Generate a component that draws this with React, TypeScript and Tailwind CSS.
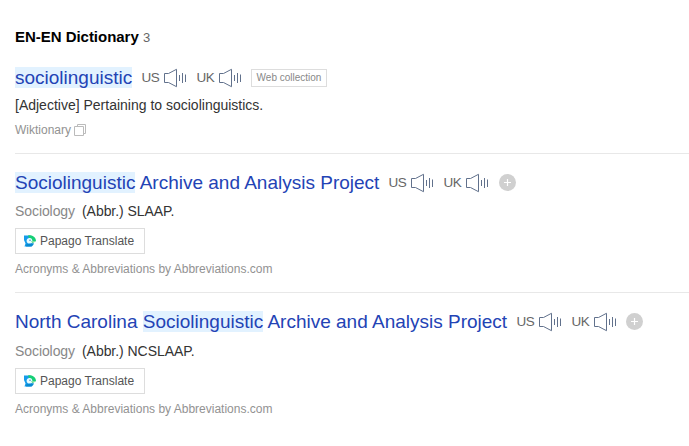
import type { ReactNode } from "react";

function Speaker() {
  return (
    <svg width="24" height="20" viewBox="0 0 24 20" fill="none" stroke="#61718c" strokeWidth="1" className="block shrink-0">
      <path d="M4.5 5.5H0.5V14.5H4.5L12.5 18.7V1.3L4.5 5.5" />
      <path d="M15.5 7V13M18.5 5V15M21.5 6.5V14" />
    </svg>
  );
}

function Pronunciation({ label }: { label: string }) {
  return (
    <span className="flex h-[21px] w-[55px] shrink-0 items-center">
      <span className="w-[23px] pt-[2px] pl-[0.6px] text-[13.5px] tracking-[-0.5px] whitespace-nowrap text-[#666]">{label}</span>
      <Speaker />
    </span>
  );
}

function Mark({ children }: { children: ReactNode }) {
  return <span className="inline-block h-[21px] bg-[#e2f2ff] leading-[21px]">{children}</span>;
}

function Title({ children, width, tail }: { children: ReactNode; width: string; tail: ReactNode }) {
  return (
    <div className="flex h-[21px] items-center">
      <h3 className={`${width} h-[21px] shrink-0 text-[19px] leading-[21px] font-normal whitespace-nowrap text-[#2343b5]`}>{children}</h3>
      <Pronunciation label="US" />
      <Pronunciation label="UK" />
      {tail}
    </div>
  );
}

function AddButton() {
  return (
    <svg width="17" height="17" viewBox="0 0 17 17" className="block">
      <circle cx="8.5" cy="8.5" r="8.5" fill="#d0d0d0" />
      <path d="M8.5 5V12M5 8.5H12" stroke="#fff" strokeWidth="1.2" />
    </svg>
  );
}

function PapagoIcon() {
  return (
    <svg width="12" height="12" viewBox="0 0 12 12" className="block">
      <path d="M0 .5H6L9 5L8 11.5H.5L1.5 8.5L0 5Z" fill="#159bea" />
      <path d="M4 .5C8.5-.3 12 2.5 12 6.3H7.8L5 3Z" fill="#16cf75" />
      <path d="M2.6 6C2.6 4.1 4 3 5.8 3.1C7.4 3.2 8.2 4.2 8.2 5.5L9.5 6.5L8 7.9C6 9.2 2.6 8.6 2.6 6Z" fill="#e8fbff" />
      <circle cx="6" cy="5.3" r=".7" fill="#2878b8" />
      <path d="M7 6.3H12L8.5 8.2Z" fill="#62d98c" />
      <path d="M2.5 9.2L10 8.2C9.3 10.5 8 11.5 6 11.5H2Z" fill="#0788cf" />
    </svg>
  );
}

function ProjectEntry({ title, width, abbr, gap, tail }: { title: ReactNode; width: string; abbr: string; gap: string; tail: ReactNode }) {
  return (
    <article className="h-[140px] border-t border-[#e8e8e8] pt-[18px]">
      <Title width={width} tail={tail}>{title}</Title>
      <p className={`${gap} flex h-[18px] items-center text-[14px] leading-[18px]`}>
        <span className="w-[67px] tracking-[-0.08px] text-[#888]">Sociology</span>
        <span className="tracking-[-0.05px] text-[#333]">(Abbr.) {abbr}</span>
      </p>
      <button className="mt-[8px] flex h-[26px] w-[130px] items-center border border-[#ddd] pl-[8px] text-[12px] text-[#555]">
        <PapagoIcon />
        <span className="ml-[4px] whitespace-nowrap">Papago Translate</span>
      </button>
      <p className="mt-[7px] text-[12px] leading-[16px] text-[#929292]">Acronyms &amp; Abbreviations by Abbreviations.com</p>
    </article>
  );
}

export default function App() {
  return (
    <main className="h-[446px] overflow-hidden bg-white pt-[27px] pl-[15px] font-['Liberation_Sans',Arial,sans-serif]">
      <h2 className="flex h-[20px] items-center text-[15px] font-bold text-black">
        <span className="w-[128px] tracking-[-0.03px] whitespace-nowrap">EN-EN Dictionary</span>
        <span className="pt-[2px] text-[13px] font-normal text-[#666]">3</span>
      </h2>
      <article className="mt-[20px] h-[86px]">
        <Title
          width="w-[126px]"
          tail={<span className="flex h-[18px] w-[76px] items-center justify-center border border-[#ddd] text-[10px] whitespace-nowrap text-[#888]">Web collection</span>}
        >
          <Mark>sociolinguistic</Mark>
        </Title>
        <p className="mt-[8px] text-[14px] leading-[18px] text-[#333]">[Adjective] Pertaining to sociolinguistics.</p>
        <div className="mt-[8px] flex h-[16px] items-center text-[12px] text-[#929292]">
          <span className="w-[59px]">Wiktionary</span>
          <svg width="12" height="12" viewBox="0 0 12 12" fill="none" stroke="#bbb" className="block">
            <path d="M3.5 2.5V.5H11.5V9.5H9.5" />
            <path d="M.5 2.5H9.5V11.5H.5Z" />
          </svg>
        </div>
      </article>
      <div className="h-[139px]">
        <ProjectEntry
          width="w-[373px]"
          gap="mt-[9px]"
          title={<><Mark>Sociolinguistic</Mark> Archive and Analysis Project</>}
          abbr="SLAAP."
          tail={<span className="ml-px"><AddButton /></span>}
        />
      </div>
      <ProjectEntry
        width="w-[501px]"
        gap="mt-[10px]"
        title={<>North Carolina <Mark>Sociolinguistic</Mark> Archive and Analysis Project</>}
        abbr="NCSLAAP."
        tail={<AddButton />}
      />
    </main>
  );
}
